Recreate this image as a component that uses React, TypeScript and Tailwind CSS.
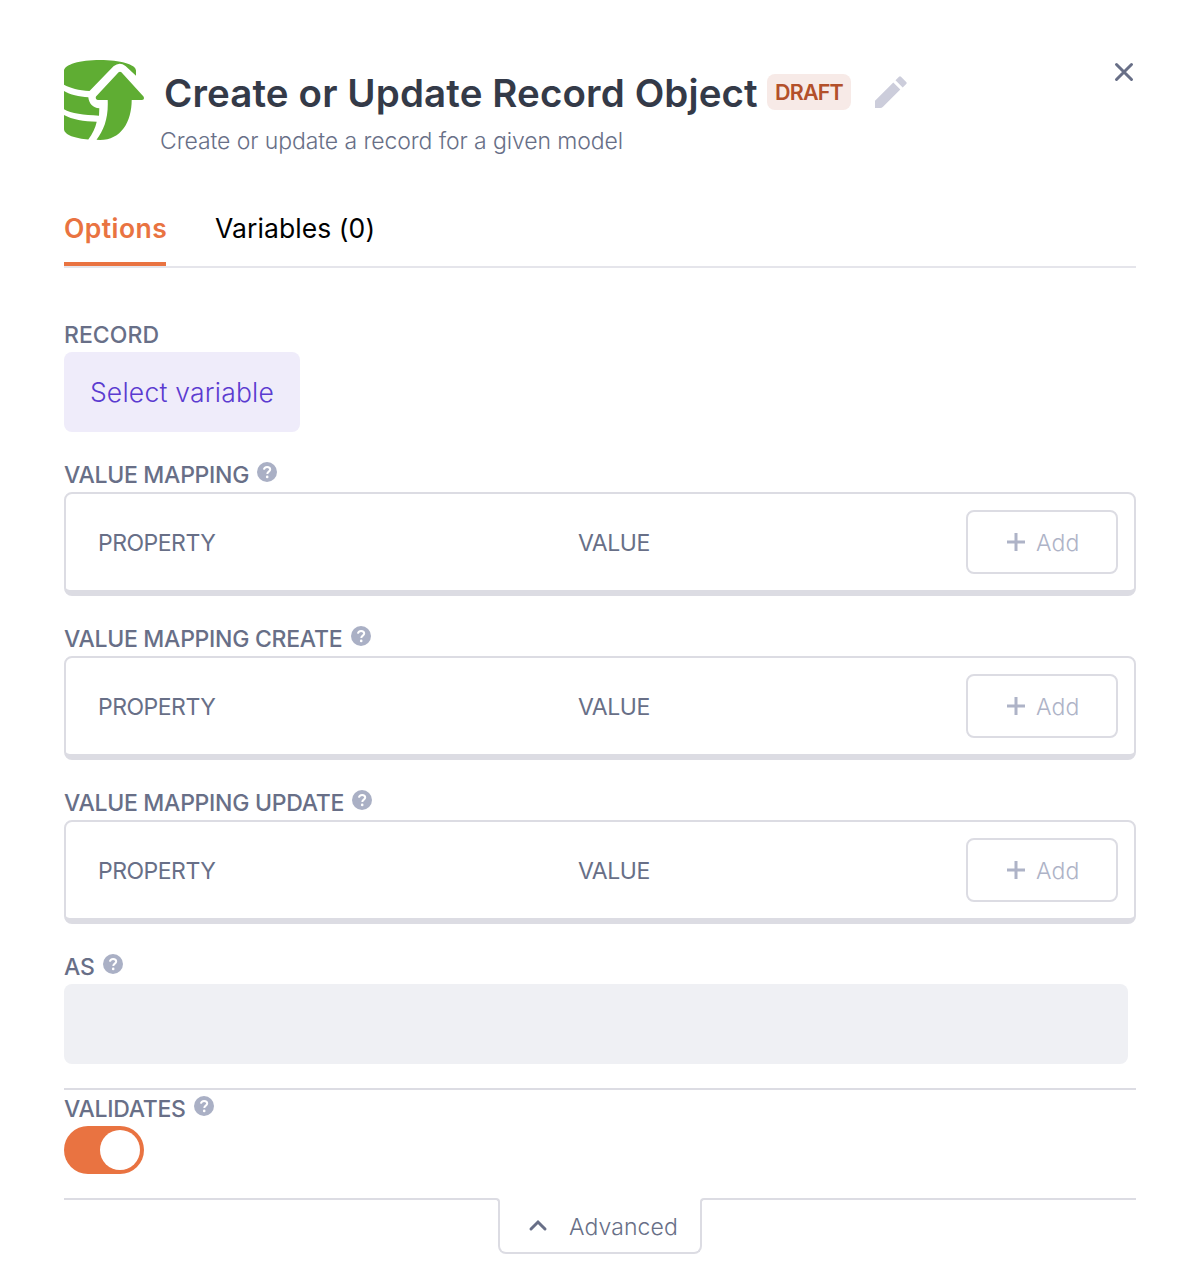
import type { ReactNode } from "react";

function RecordLogo() {
  return (
    <svg viewBox="0 0 80 80" className="h-20 w-20 shrink-0" fill="#5fad33">
      <path d="M0 11C0 4.500 16 0 36 0S72 4.500 72 10.500V15.700L61.500 6Q55.500 1.200 49.500 6.300L25.500 31C15 30.500 6 28 0 24.700Z" />
      <path d="M0 31C6 34.500 15 36.800 24.300 37.200C25 43.500 29 47.800 35.300 48.300L35 55.700C20 55 7 53.500 0 49.300Z" />
      <path d="M0 55C8 59.500 20 61.500 32.700 61.800C31.500 68 28.500 74 24.300 79.500C12 78.500 0 75 0 69Z" />
      <path d="M54.600 12.300Q56 11.200 57.400 12.300L79.500 36.500Q81 39.500 78 40H67.700C67.700 62 57 80 36 80L32.500 79.700C40 70 44.500 58 43.700 40H33.700Q31 39.500 32 36.500Z" />
    </svg>
  );
}

function HelpIcon() {
  return (
    <svg viewBox="0 0 20 20" className="mt-1 h-5 w-5 shrink-0">
      <circle cx="10" cy="10" r="10" fill="#aab0c5" />
      <path
        d="M6.900 7.700C7.200 5.900 8.400 5 10.100 5C12 5 13.200 6.100 13.200 7.600C13.200 9.600 10.300 9.700 10.300 11.900"
        fill="none"
        stroke="#fff"
        strokeWidth="2"
      />
      <circle cx="10.200" cy="14.900" r="1.300" fill="#fff" />
    </svg>
  );
}

function Label({ children, help = true }: { children: ReactNode; help?: boolean }) {
  return (
    <div className="flex h-[34px] items-start gap-[8.300px]">
      <span
        className={
          help
            ? "text-[23px] leading-[34px] font-medium tracking-[-0.27px] whitespace-nowrap"
            : "text-[23px] leading-[34px] font-medium tracking-[0.05px] whitespace-nowrap"
        }
      >
        {children}
      </span>
      {help && <HelpIcon />}
    </div>
  );
}

function Mapping({ label }: { label: string }) {
  return (
    <section className="mt-[26px]">
      <Label>{label}</Label>
      <div className="flex h-[104px] items-start rounded-lg border-2 border-b-[6px] border-[#dcdce3] pt-4 pr-4 pl-8 text-[23px] leading-[66px]">
        <span className="w-[480px] tracking-[-0.5px]">PROPERTY</span>
        <span className="grow tracking-[-0.45px]">VALUE</span>
        <button className="flex h-16 w-[152px] items-center rounded-lg border-2 border-[#dcdce3] pl-[38px] text-[#aeb3c7]">
          <svg viewBox="0 0 20 20" className="h-5 w-5" stroke="currentColor" strokeWidth="3">
            <path d="M10 1V19M1 10H19" />
          </svg>
          <span className="mt-0.5 ml-[10px] leading-[60px] font-light tracking-[0.2px]">Add</span>
        </button>
      </div>
    </section>
  );
}

export default function App() {
  return (
    <main className="h-[1286px] w-[1200px] bg-white px-16 pt-[60px] font-['Inter','Liberation_Sans',sans-serif] text-[#686f87]">
      <header className="flex h-[98px]">
        <RecordLogo />
        <div className="ml-4 pt-[14px]">
          <div className="flex h-9 items-center pl-1">
            <h1 className="w-[603px] pt-[2px] text-[38.5px] leading-9 font-semibold tracking-[0.12px] whitespace-nowrap text-[#343a48]">
              Create or Update Record Object
            </h1>
            <span className="h-9 w-[84px] rounded-lg bg-[#f7eae7] text-center text-[21.5px] leading-9 font-semibold tracking-[-0.8px] text-[#b3502a]">
              DRAFT
            </span>
            <svg viewBox="0 0 32 32" className="ml-6 h-8 w-8" fill="#cccddb">
              <path d="M0 32V24.700L18.300 6.500L25.300 13.500L8 30.800Q6.800 32 5.200 32Z" />
              <path d="M20.500 4.300L24 .8Q25 -.2 26 .8L31.200 6Q32.200 7 31.200 8L27.700 11.500Z" />
            </svg>
          </div>
          <p className="mt-[14px] text-[23px] leading-[34px] font-light tracking-[-0.09px]">
            Create or update a record for a given model
          </p>
        </div>
        <button aria-label="Close" className="mt-0.5 ml-auto h-5 w-6">
          <svg viewBox="0 0 24 20" className="h-5 w-6" stroke="currentColor" strokeWidth="3" strokeLinecap="round">
            <path d="M4.500 2.500L19.500 17.500M19.500 2.500L4.500 17.500" />
          </svg>
        </button>
      </header>

      <nav className="flex h-[110px] items-end border-b-2 border-[#e5e5eb] text-[26.5px] whitespace-nowrap">
        <span className="h-[55px] w-[102px] border-b-4 border-[#e97341] leading-[35px] font-semibold tracking-[0.45px] text-[#e97341]">
          Options
        </span>
        <span className="ml-[49px] h-[55px] leading-[35px] tracking-[0.08px] text-black">Variables (0)</span>
      </nav>

      <section className="mt-[50px]">
        <Label help={false}>RECORD</Label>
        <button className="h-20 w-[236px] rounded-lg bg-[#efecfa] text-[26.5px] leading-[80px] font-light tracking-[0.22px] text-[#5b3bd0]">
          Select variable
        </button>
      </section>

      <Mapping label="VALUE MAPPING" />
      <Mapping label="VALUE MAPPING CREATE" />
      <Mapping label="VALUE MAPPING UPDATE" />

      <section className="mt-[26px]">
        <Label>AS</Label>
        <div className="h-20 w-[1064px] rounded-lg bg-[#eff0f4]" />
      </section>

      <section className="mt-6 border-t-2 border-[#dcdce3] pt-0.5">
        <Label>VALIDATES</Label>
        <div className="flex h-12 w-20 items-center justify-end rounded-full bg-[#e97341] pr-1">
          <span className="h-10 w-10 rounded-full bg-white" />
        </div>
      </section>

      <footer className="mt-6 flex items-start">
        <div className="h-1 w-[436px] rounded-tr-[4px] border-t-2 border-r-2 border-[#dcdce3]" />
        <button className="mt-1 -ml-0.5 flex h-[52px] w-[204px] items-center rounded-b-lg border-x-2 border-b-2 border-[#dcdce3] pl-7">
          <svg
            viewBox="0 0 20 20"
            className="mb-[5px] h-5 w-5"
            fill="none"
            stroke="currentColor"
            strokeWidth="3"
            strokeLinecap="round"
          >
            <path d="M3 14L10 7L17 14" />
          </svg>
          <span className="mb-px ml-[21px] text-[23px] leading-[34px] font-light tracking-[0.1px]">Advanced</span>
        </button>
        <div className="-ml-0.5 h-1 grow rounded-tl-[4px] border-t-2 border-l-2 border-[#dcdce3]" />
      </footer>
    </main>
  );
}
